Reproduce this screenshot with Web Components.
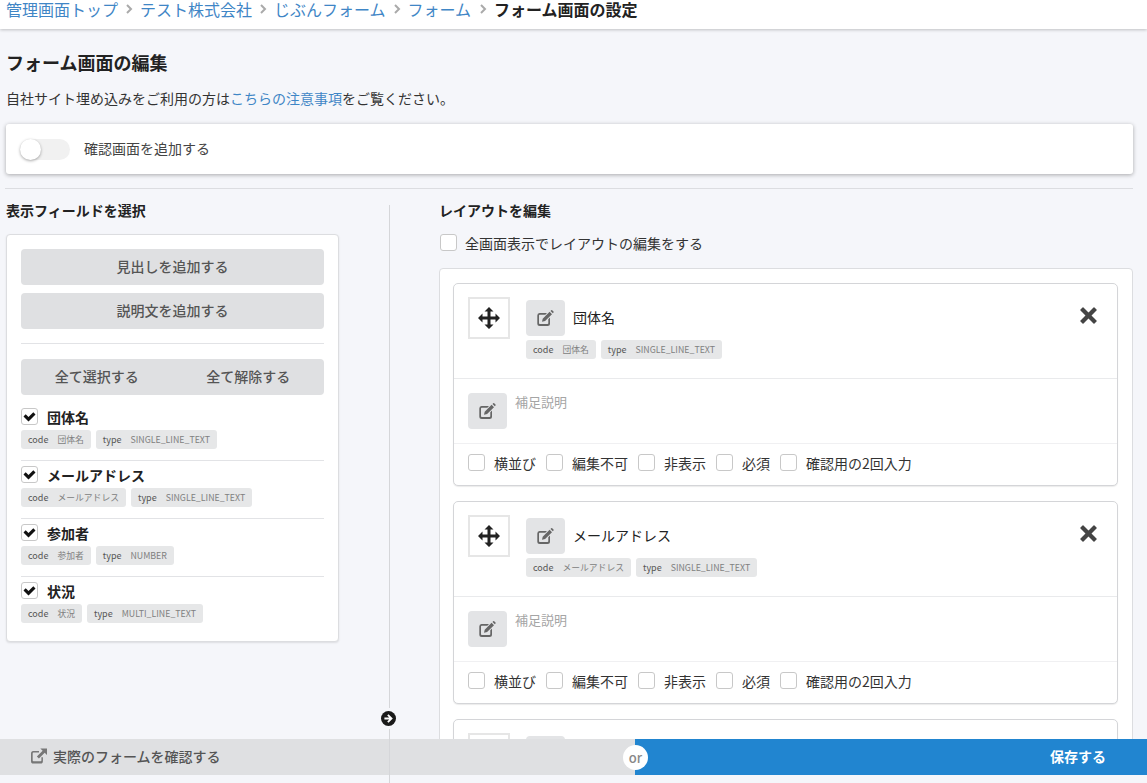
<!DOCTYPE html>
<html lang="ja">

<head>
  <meta charset="UTF-8" />
  <title>フォーム画面の設定</title>
  <style>
    * {
      box-sizing: border-box;
    }

    html,
    body {
      margin: 0;
      height: 100%;
      overflow: hidden;
    }

    body {
      background: #f5f6fa;
      color: #222;
      font-family: "Noto Sans CJK JP", "Noto Sans", sans-serif;
    }
  </style>
</head>

<body>
  <template id="crumbs-template">
    <style>
      * {
        box-sizing: border-box;
      }

      :host {
        display: flex;
        align-items: center;
        height: 29px;
        padding: 0 0 11px 6px;
        background: #fff;
        box-shadow: 0 1px 3px rgba(0, 0, 0, .22);
        font-size: 16px;
        line-height: 18px;
        white-space: nowrap;
        position: relative;
      }

      a {
        color: #3f86c6;
      }

      b {
        color: #222;
      }

      i {
        display: flex;
        justify-content: center;
        width: 22px;
      }

      i:last-of-type {
        width: 23px;
      }
    </style>
    <a>管理画面トップ</a><i><svg width="8" height="12" viewBox="0 0 8 12"><path d="M2 2l4 4-4 4" fill="none" stroke="#aaa" stroke-width="2" /></svg></i>
    <a>テスト株式会社</a><i><svg width="8" height="12" viewBox="0 0 8 12"><path d="M2 2l4 4-4 4" fill="none" stroke="#aaa" stroke-width="2" /></svg></i>
    <a>じぶんフォーム</a><i><svg width="8" height="12" viewBox="0 0 8 12"><path d="M2 2l4 4-4 4" fill="none" stroke="#aaa" stroke-width="2" /></svg></i>
    <a>フォーム</a><i><svg width="8" height="12" viewBox="0 0 8 12"><path d="M2 2l4 4-4 4" fill="none" stroke="#aaa" stroke-width="2" /></svg></i>
    <b>フォーム画面の設定</b>
  </template>

  <template id="check-box-template">
    <style>
      * {
        box-sizing: border-box;
      }

      :host {
        display: inline-flex;
        align-items: center;
        gap: 9px;
        font-size: 14px;
        color: #333;
        white-space: nowrap;
      }

      span {
        display: flex;
        align-items: center;
        justify-content: center;
        width: 17px;
        height: 17px;
        flex: none;
        background: #fff;
        border: 1px solid #c8c8c8;
        border-radius: 3px;
      }

      svg {
        display: none;
      }

      :host([checked]) svg {
        display: block;
      }
    </style>
    <span><svg width="13" height="11" viewBox="0 0 13 11"><path d="M.5 5.500l2.200-2.200 2.800 2.800L10.300 1.200l2.200 2.200L5.500 10.500z" fill="#111" /></svg></span>
    <slot></slot>
  </template>

  <template id="field-tags-template">
    <style>
      :host {
        display: flex;
        gap: 5px;
      }

      span {
        display: flex;
        align-items: center;
        height: 19px;
        padding: 0 7px;
        gap: 9px;
        background: #e6e7e8;
        border-radius: 3px;
        font-size: 9px;
        color: #808080;
        white-space: nowrap;
      }

      slot {
        font-size: 8.800px;
      }

      em {
        font-style: normal;
        color: #555;
      }
    </style>
    <span><em>code</em><slot name="code"></slot></span>
    <span><em>type</em><slot name="type"></slot></span>
  </template>

  <template id="pick-field-template">
    <style>
      * {
        box-sizing: border-box;
      }

      :host {
        display: block;
        height: 58px;
        padding-top: 5px;
        border-bottom: 1px solid #e2e3e6;
      }

      :host(:last-of-type) {
        border-bottom: 0;
      }

      check-box {
        font-weight: 700;
        color: #222;
        display: flex;
        height: 17px;
        margin-bottom: 5px;
      }
    </style>
    <check-box checked><slot name="label"></slot></check-box>
    <field-tags><slot name="code" slot="code"></slot><slot name="type" slot="type"></slot></field-tags>
  </template>

  <template id="edit-button-template">
    <style>
      :host {
        display: flex;
        align-items: center;
        justify-content: center;
        width: 39px;
        height: 36px;
        flex: none;
        background: #e3e4e6;
        border-radius: 4px;
      }
    </style>
    <svg width="17" height="16" viewBox="0 0 17 16">
      <path d="M2.500 3H10L8.300 4.700H2.800q-.8 0-.8.8v7.700q0 .8.8.8h7.700q.8 0 .8-.8V9.300L13 7.600v5.900Q13 16 10.500 16H2.800Q.3 16 .3 13.500V5.500Q.3 3 2.500 3z" fill="#666" />
      <path d="M5 11.700l.7-3L12.600 1.800l2.400 2.400-6.900 6.900zM13.500 1l.7-.7q.5-.4 1 0l1.300 1.300q.4.5 0 1l-.7.7z" fill="#666" />
    </svg>
  </template>

  <template id="layout-card-template">
    <style>
      * {
        box-sizing: border-box;
      }

      :host {
        display: block;
        height: 203px;
        flex: none;
        background: #fff;
        border: 1px solid #d4d5d8;
        border-radius: 5px;
        box-shadow: 0 1px 1px rgba(0, 0, 0, .08);
        color: #333;
      }

      .top {
        display: flex;
        height: 95px;
        padding: 13px 14px 0;
        border-bottom: 1px solid #e9eaec;
      }

      .move {
        display: flex;
        align-items: center;
        justify-content: center;
        width: 42px;
        height: 42px;
        flex: none;
        border: 2px solid #e6e6e6;
        margin-right: 16px;
      }

      .title {
        display: flex;
        flex-direction: column;
        gap: 4px;
        padding-top: 3px;
        flex: 1;
      }

      .name {
        display: flex;
        align-items: center;
        gap: 8px;
        font-size: 14px;
        color: #222;
      }

      .name ::slotted(span) {
        margin-bottom: 2px;
      }

      .close {
        margin: 10px 6px 0 0;
      }

      .note {
        display: flex;
        gap: 8px;
        height: 65px;
        padding: 14px 14px 0;
        border-bottom: 1px solid #f0f0f2;
        font-size: 13px;
        line-height: 18px;
        color: #a5a5a5;
      }

      .opts {
        display: flex;
        align-items: center;
        height: 41px;
        padding: 0 14px 4px;
        gap: 10px;
      }

      /* the card that runs under the footer only shows its top */
      :host([stub]) .close,
      :host([stub]) field-tags,
      :host([stub]) .note,
      :host([stub]) .opts {
        display: none;
      }
    </style>
    <div class="top">
      <div class="move">
        <svg width="22" height="22" viewBox="0 0 22 22">
          <path d="M11 0l4.500 4.500h-3v5h5v-3L22 11l-4.500 4.500v-3h-5v5h3L11 22l-4.500-4.500h3v-5h-5v3L0 11l4.500-4.500v3h5v-5h-3z" fill="#222" />
        </svg>
      </div>
      <div class="title">
        <div class="name"><edit-button></edit-button><slot name="label"></slot></div>
        <field-tags><slot name="code" slot="code"></slot><slot name="type" slot="type"></slot></field-tags>
      </div>
      <svg class="close" width="17" height="17" viewBox="0 0 17 17">
        <path d="M3.500 .6L8.500 5.600 13.500 .6q.5-.5 1 0l2 2q.5.5 0 1l-5 5 5 5q.5.5 0 1l-2 2q-.5.5-1 0l-5-5-5 5q-.5.5-1 0l-2-2q-.5-.5 0-1l5-5-5-5q-.5-.5 0-1l2-2q.5-.5 1 0z" fill="#444" />
      </svg>
    </div>
    <div class="note"><edit-button></edit-button><span>補足説明</span></div>
    <div class="opts">
      <check-box>横並び</check-box>
      <check-box>編集不可</check-box>
      <check-box>非表示</check-box>
      <check-box>必須</check-box>
      <check-box>確認用の2回入力</check-box>
    </div>
  </template>

  <template id="left-panel-template">
    <style>
      * {
        box-sizing: border-box;
      }

      :host {
        display: block;
        width: 333px;
        height: 408px;
        padding: 14px 14px 0;
        background: #fff;
        border: 1px solid #dcdde0;
        border-radius: 4px;
        box-shadow: 0 1px 2px rgba(0, 0, 0, .1);
      }

      .btn {
        display: flex;
        align-items: center;
        justify-content: space-around;
        height: 36px;
        padding-bottom: 2px;
        margin-bottom: 8px;
        background: #dfe0e2;
        border-radius: 4px;
        font-size: 14px;
        font-weight: 500;
        color: #555;
      }

      hr {
        border: 0;
        border-top: 1px solid #e2e3e6;
        margin: 14px 0 15px;
      }
    </style>
    <div class="btn">見出しを追加する</div>
    <div class="btn">説明文を追加する</div>
    <hr />
    <div class="btn"><span>全て選択する</span><span>全て解除する</span></div>
    <slot></slot>
  </template>

  <template id="action-bar-template">
    <style>
      * {
        box-sizing: border-box;
      }

      :host {
        position: fixed;
        left: 0;
        right: 0;
        bottom: 0;
        height: 44px;
        padding-bottom: 8px;
        display: flex;
        background: #f5f6fa;
        font-size: 14px;
        font-weight: 500;
      }

      .preview {
        display: flex;
        align-items: center;
        gap: 6px;
        width: 635px;
        padding: 0 0 2px 31px;
        background: #dfe0e2;
        color: #555;
      }

      .save {
        flex: 1;
        display: flex;
        align-items: center;
        justify-content: flex-end;
        padding: 0 41px 2px 0;
        background: #2185d0;
        color: #fff;
        font-weight: 700;
      }

      .rule {
        position: absolute;
        left: 389px;
        top: 0;
        bottom: 0;
        width: 1px;
        background: #d5d6d9;
      }

      .or {
        position: absolute;
        left: 623px;
        top: 6px;
        width: 25px;
        height: 25px;
        display: flex;
        align-items: center;
        justify-content: center;
        border-radius: 50%;
        background: #fff;
        color: #888;
        font-size: 13px;
      }
    </style>
    <div class="preview">
      <svg width="16" height="16" viewBox="0 0 18 17">
        <path d="M2.500 3H9v1.700H2.800q-.9 0-.9.9v8q0 .9.9.9h8q.9 0 .9-.9V10h1.700v4q0 3-2.600 3H2.500Q0 17 0 14V6q0-3 2.500-3z" fill="#777" />
        <path d="M10.500 0H18v7.500l-2.600-2.600-6.500 6.500-2.300-2.300 6.500-6.500z" fill="#777" />
      </svg>
      <span>実際のフォームを確認する</span>
    </div>
    <div class="save">保存する</div>
    <div class="rule"></div>
    <div class="or">or</div>
  </template>

  <template id="form-editor-template">
    <style>
      * {
        box-sizing: border-box;
      }

      :host {
        display: block;
        padding: 0 14px 0 6px;
        color: #222;
      }

      h2 {
        margin: 0;
        padding-top: 20px;
        height: 54px;
        font-size: 18px;
        line-height: 26px;
        font-weight: 700;
      }

      p {
        margin: 0;
        height: 41px;
        padding-top: 4px;
        font-size: 14px;
        line-height: 22px;
        color: #333;
      }

      a {
        color: #3f86c6;
      }

      .confirm {
        display: flex;
        align-items: center;
        gap: 14px;
        height: 50px;
        padding-left: 14px;
        background: #fff;
        border-radius: 3px;
        box-shadow: 0 1px 4px rgba(0, 0, 0, .32);
        font-size: 14px;
        color: #444;
      }

      .confirm span:last-child {
        padding-bottom: 2px;
      }

      .toggle {
        position: relative;
        width: 50px;
        height: 21px;
        background: #f1f1f1;
        border-radius: 11px;
      }

      .toggle::before {
        content: "";
        position: absolute;
        left: 0;
        top: 0;
        width: 21px;
        height: 21px;
        border-radius: 50%;
        background: #fff;
        box-shadow: 0 1px 3px rgba(0, 0, 0, .35);
      }

      hr {
        border: 0;
        border-top: 1px solid #dcdde1;
        margin: 14px 0 16px -1px;
      }

      .columns {
        display: grid;
        grid-template-columns: 384px 1fr;
      }

      .left {
        border-right: 1px solid #d5d6d9;
        height: 578px;
        position: relative;
      }

      h3 {
        margin: 0 0 15px;
        padding-bottom: 2px;
        height: 14px;
        font-size: 14px;
        line-height: 10px;
        font-weight: 700;
      }

      .right {
        padding-left: 49px;
      }

      .full {
        display: flex;
        gap: 8px;
        height: 17px;
        margin: 0 0 17px 1px;
      }

      .board {
        display: flex;
        flex-direction: column;
        gap: 15px;
        height: 514px;
        padding: 14px 14px 0 13px;
        background: #fff;
        border: 1px solid #dcdde0;
        border-radius: 4px;
        overflow: hidden;
      }

      .arrow {
        position: absolute;
        right: -7px;
        top: 503px;
        padding: 3px 0;
        background: #f5f6fa;
        display: flex;
      }
    </style>
    <h2>フォーム画面の編集</h2>
    <p>自社サイト埋め込みをご利用の方は<a>こちらの注意事項</a>をご覧ください。</p>
    <div class="confirm"><span class="toggle"></span><span>確認画面を追加する</span></div>
    <hr />
    <div class="columns">
      <div class="left">
        <h3>表示フィールドを選択</h3>
        <slot name="fields"></slot>
        <span class="arrow"><svg width="15" height="15" viewBox="0 0 15 15">
            <circle cx="7.500" cy="7.500" r="7.500" fill="#1a1a1a" />
            <path d="M7.500 3.200l4.300 4.300-4.300 4.300-1.300-1.300 2-2.100H3.400V6.600h4.800l-2-2.100z" fill="#fff" />
          </svg></span>
      </div>
      <div class="right">
        <h3>レイアウトを編集</h3>
        <check-box class="full">全画面表示でレイアウトの編集をする</check-box>
        <div class="board"><slot name="cards"></slot></div>
      </div>
    </div>
  </template>

  <crumbs-bar></crumbs-bar>
  <form-editor>
    <left-panel slot="fields">
      <pick-field><span slot="label">団体名</span><span slot="code">団体名</span><span slot="type">SINGLE_LINE_TEXT</span></pick-field>
      <pick-field><span slot="label">メールアドレス</span><span slot="code">メールアドレス</span><span slot="type">SINGLE_LINE_TEXT</span></pick-field>
      <pick-field><span slot="label">参加者</span><span slot="code">参加者</span><span slot="type">NUMBER</span></pick-field>
      <pick-field><span slot="label">状況</span><span slot="code">状況</span><span slot="type">MULTI_LINE_TEXT</span></pick-field>
    </left-panel>
    <layout-card slot="cards"><span slot="label">団体名</span><span slot="code">団体名</span><span slot="type">SINGLE_LINE_TEXT</span></layout-card>
    <layout-card slot="cards"><span slot="label">メールアドレス</span><span slot="code">メールアドレス</span><span slot="type">SINGLE_LINE_TEXT</span></layout-card>
    <layout-card slot="cards" stub></layout-card>
  </form-editor>
  <action-bar></action-bar>

  <script type="module">
    function define(name, templateId) {
      customElements.define(name, class extends HTMLElement {
        constructor() {
          super()
          const template = document.getElementById(templateId)
          this.attachShadow({ mode: 'open' })
          this.shadowRoot.appendChild(template.content.cloneNode(true))
        }
      })
    }

    define('crumbs-bar', 'crumbs-template')
    define('check-box', 'check-box-template')
    define('field-tags', 'field-tags-template')
    define('pick-field', 'pick-field-template')
    define('edit-button', 'edit-button-template')
    define('layout-card', 'layout-card-template')
    define('left-panel', 'left-panel-template')
    define('action-bar', 'action-bar-template')
    define('form-editor', 'form-editor-template')
  </script>
</body>

</html>
